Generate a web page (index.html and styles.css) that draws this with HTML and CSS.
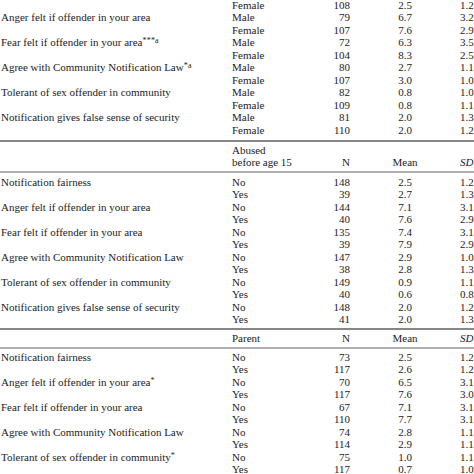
FILE: index.html
```html
<!DOCTYPE html>
<html>
<head>
<meta charset="utf-8">
<link rel="stylesheet" href="styles.css">
</head>
<body>
<table class="stats">
  <colgroup>
    <col class="c-label"><col class="c-group"><col class="c-n"><col class="c-mean"><col class="c-sd">
  </colgroup>
  <tbody class="sec-a">
    <tr class="top"><td></td><td>Female</td><td class="n">108</td><td class="m">2.5</td><td>1.2</td></tr>
    <tr><td>Anger felt if offender in your area</td><td>Male</td><td class="n">79</td><td class="m">6.7</td><td>3.2</td></tr>
    <tr><td></td><td>Female</td><td class="n">107</td><td class="m">7.6</td><td>2.9</td></tr>
    <tr><td>Fear felt if offender in your area<sup>***a</sup></td><td>Male</td><td class="n">72</td><td class="m">6.3</td><td>3.5</td></tr>
    <tr><td></td><td>Female</td><td class="n">104</td><td class="m">8.3</td><td>2.5</td></tr>
    <tr><td>Agree with Community Notification Law<sup>*a</sup></td><td>Male</td><td class="n">80</td><td class="m">2.7</td><td>1.1</td></tr>
    <tr><td></td><td>Female</td><td class="n">107</td><td class="m">3.0</td><td>1.0</td></tr>
    <tr><td>Tolerant of sex offender in community</td><td>Male</td><td class="n">82</td><td class="m">0.8</td><td>1.0</td></tr>
    <tr><td></td><td>Female</td><td class="n">109</td><td class="m">0.8</td><td>1.1</td></tr>
    <tr><td>Notification gives false sense of security</td><td>Male</td><td class="n">81</td><td class="m">2.0</td><td>1.3</td></tr>
    <tr class="last"><td></td><td>Female</td><td class="n">110</td><td class="m">2.0</td><td>1.2</td></tr>
  </tbody>
  <tbody class="sec-b">
    <tr class="head head-two"><td></td><td>Abused<br>before age 15</td><td class="n">N</td><td class="m">Mean</td><td class="sd">SD</td></tr>
    <tr class="first"><td>Notification fairness</td><td>No</td><td class="n">148</td><td class="m">2.5</td><td>1.2</td></tr>
    <tr><td></td><td>Yes</td><td class="n">39</td><td class="m">2.7</td><td>1.3</td></tr>
    <tr><td>Anger felt if offender in your area</td><td>No</td><td class="n">144</td><td class="m">7.1</td><td>3.1</td></tr>
    <tr><td></td><td>Yes</td><td class="n">40</td><td class="m">7.6</td><td>2.9</td></tr>
    <tr><td>Fear felt if offender in your area</td><td>No</td><td class="n">135</td><td class="m">7.4</td><td>3.1</td></tr>
    <tr><td></td><td>Yes</td><td class="n">39</td><td class="m">7.9</td><td>2.9</td></tr>
    <tr><td>Agree with Community Notification Law</td><td>No</td><td class="n">147</td><td class="m">2.9</td><td>1.0</td></tr>
    <tr><td></td><td>Yes</td><td class="n">38</td><td class="m">2.8</td><td>1.3</td></tr>
    <tr><td>Tolerant of sex offender in community</td><td>No</td><td class="n">149</td><td class="m">0.9</td><td>1.1</td></tr>
    <tr><td></td><td>Yes</td><td class="n">40</td><td class="m">0.6</td><td>0.8</td></tr>
    <tr><td>Notification gives false sense of security</td><td>No</td><td class="n">148</td><td class="m">2.0</td><td>1.2</td></tr>
    <tr class="last"><td></td><td>Yes</td><td class="n">41</td><td class="m">2.0</td><td>1.3</td></tr>
  </tbody>
  <tbody class="sec-c">
    <tr class="head head-one"><td></td><td>Parent</td><td class="n">N</td><td class="m">Mean</td><td class="sd">SD</td></tr>
    <tr class="first"><td>Notification fairness</td><td>No</td><td class="n">73</td><td class="m">2.5</td><td>1.2</td></tr>
    <tr><td></td><td>Yes</td><td class="n">117</td><td class="m">2.6</td><td>1.2</td></tr>
    <tr><td>Anger felt if offender in your area<sup>*</sup></td><td>No</td><td class="n">70</td><td class="m">6.5</td><td>3.1</td></tr>
    <tr><td></td><td>Yes</td><td class="n">117</td><td class="m">7.6</td><td>3.0</td></tr>
    <tr><td>Fear felt if offender in your area</td><td>No</td><td class="n">67</td><td class="m">7.1</td><td>3.1</td></tr>
    <tr><td></td><td>Yes</td><td class="n">110</td><td class="m">7.7</td><td>3.1</td></tr>
    <tr><td>Agree with Community Notification Law</td><td>No</td><td class="n">74</td><td class="m">2.8</td><td>1.1</td></tr>
    <tr><td></td><td>Yes</td><td class="n">114</td><td class="m">2.9</td><td>1.1</td></tr>
    <tr><td>Tolerant of sex offender in community<sup>*</sup></td><td>No</td><td class="n">75</td><td class="m">1.0</td><td>1.1</td></tr>
    <tr><td></td><td>Yes</td><td class="n">117</td><td class="m">0.7</td><td>1.0</td></tr>
  </tbody>
</table>
</body>
</html>
```
FILE: styles.css
```css
html, body {
  margin: 0;
  padding: 0;
  background: #ffffff;
  overflow: hidden;
}
body {
  width: 474px;
  height: 474px;
}
.stats {
  margin-top: -1.25px;
  border-collapse: separate;
  border-spacing: 0;
  table-layout: fixed;
  width: 500px;
  font-family: "Liberation Serif", "Times New Roman", serif;
  font-size: 11px;
  line-height: 12.5px;
  color: #1c1c1c;
}
.c-label { width: 232px; }
.c-group { width: 75px; }
.c-n { width: 43px; }
.c-mean { width: 110px; }
.c-sd { width: 40px; }
.stats td {
  padding: 0;
  white-space: nowrap;
  vertical-align: top;
}
.stats td:first-child {
  padding-left: 1px;
}
.stats td.n { text-align: right; }
.stats td.m { text-align: center; }
.stats td.sd { font-style: italic; }
.stats sup {
  font-size: 8px;
  line-height: 0;
  vertical-align: 3px;
  letter-spacing: 0.2px;
}
.sec-a tr.last td { padding-bottom: 3.5px; }
.sec-b tr.first td { padding-top: 2.5px; }
.sec-b tr.last td { padding-bottom: 2.5px; }
.sec-c tr.first td { padding-top: 2px; }
.stats tr.head td {
  vertical-align: bottom;
  border-top: 2px solid #878787;
  border-bottom: 2px solid #b0b0b0;
}
.stats tr.head-two td {
  padding-top: 2px;
  padding-bottom: 2.5px;
}
.stats tr.head-one td {
  padding-top: 2px;
  padding-bottom: 2px;
}
```
